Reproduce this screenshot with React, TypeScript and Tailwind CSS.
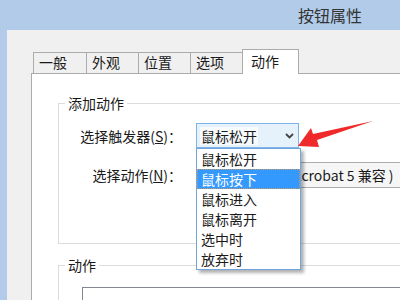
import React from "react";

const tabs = [
  { text: "一般", w: "w-[54px]" },
  { text: "外观", w: "w-[53px]" },
  { text: "位置", w: "w-[53px]" },
  { text: "选项", w: "w-[53px]" },
];

const triggers = ["鼠标松开", "鼠标按下", "鼠标进入", "鼠标离开", "选中时", "放弃时"];

const Chevron = () => (
  <svg width="9" height="6" viewBox="0 0 9 6">
    <path d="M1 1l3.5 3.5L8 1" fill="none" stroke="#444" strokeWidth="1.8" />
  </svg>
);

export default function App() {
  return (
    <div className="relative w-[400px] h-[300px] overflow-hidden bg-[#b1cbe9] font-['Noto_Sans_CJK_SC',sans-serif] text-[14px] text-[#1a1a1a]">
      {/* title bar */}
      <div className="h-[30px] flex items-center justify-end pr-[38px] text-[16px] text-[#333]">
        按钮属性
      </div>

      <div className="ml-[7px] h-[270px] bg-[#f0f0f0] pl-[24px] pt-[19px]">
        {/* tabs */}
        <div className="flex items-end h-[24px] pl-[2px]">
          {tabs.map(({ text, w }, i) => (
            <div
              key={text}
              className={`${w} ${i > 0 ? "-ml-px" : ""} h-[21px] border border-b-0 border-[#acacac] bg-[#f0f0f0] pl-[5px] leading-[19px]`}
            >
              {text}
            </div>
          ))}
          <div className="relative z-10 -ml-px -mb-px h-[25px] w-[57px] border border-b-0 border-[#acacac] bg-white pl-[8px] leading-[22px]">
            动作
          </div>
        </div>

        {/* tab panel */}
        <div className="h-[300px] bg-white border-l border-t border-[#acacac] pl-[26px] pt-[21px]">
          <fieldset className="w-[380px] h-[149px] border border-[#dcdcdc]">
            <legend className="ml-[6px] px-[3px] leading-[16px]">添加动作</legend>
            <div className="pt-[12px] flex flex-col gap-[14px]">
              <div className="flex items-center">
                <div className="w-[123px] text-right leading-[18px]">
                  选择触发器(<span className="underline">S</span>)：
                </div>
                <div className="relative ml-[14px]">
                  <div className="w-[103px] h-[25px] flex items-center justify-between border border-[#7eb4ea] bg-[#e5f1fb] pl-[3px] pr-[4px]">
                    <span className="bg-[#f7fbfe] px-px leading-[18px]">鼠标松开</span>
                    <Chevron />
                  </div>
                  <div className="absolute left-0 top-full z-20 w-[105px] border border-[#6fa4dc] bg-white shadow-[3px_3px_3px_rgba(0,0,0,0.3)]">
                    {triggers.map((t) => (
                      <div
                        key={t}
                        className={
                          t === "鼠标按下"
                            ? "h-[20px] pl-[3px] leading-[18px] bg-[#3399ff] text-white border border-dotted border-[#c99a66]"
                            : "h-[20px] pl-[4px] leading-[20px]"
                        }
                      >
                        {t}
                      </div>
                    ))}
                  </div>
                </div>
              </div>
              <div className="flex items-center">
                <div className="w-[123px] text-right leading-[18px]">
                  选择动作(<span className="underline">N</span>)：
                </div>
                <div className="ml-[14px] w-[230px] h-[26px] flex items-center border border-[#acacac] bg-[#f6f6f6] pl-[4px] whitespace-nowrap leading-[18px]">
                  播放媒体文件 (Acrobat 5 兼容 )
                </div>
              </div>
            </div>
          </fieldset>

          <fieldset className="mt-[13px] w-[380px] h-[100px] border border-[#dcdcdc]">
            <legend className="ml-[6px] px-[3px] leading-[16px]">动作</legend>
            <div className="ml-[23px] mt-[14px] w-[340px] h-[60px] border border-[#828790] bg-white" />
          </fieldset>
        </div>
      </div>

      {/* red annotation arrow */}
      <svg
        className="absolute left-0 top-0 z-30 pointer-events-none"
        width="400"
        height="300"
        viewBox="0 0 400 300"
      >
        <polygon
          points="298,146 311,128 313,134 373,121 317,140 319,147"
          fill="#f02a2a"
        />
      </svg>
    </div>
  );
}
